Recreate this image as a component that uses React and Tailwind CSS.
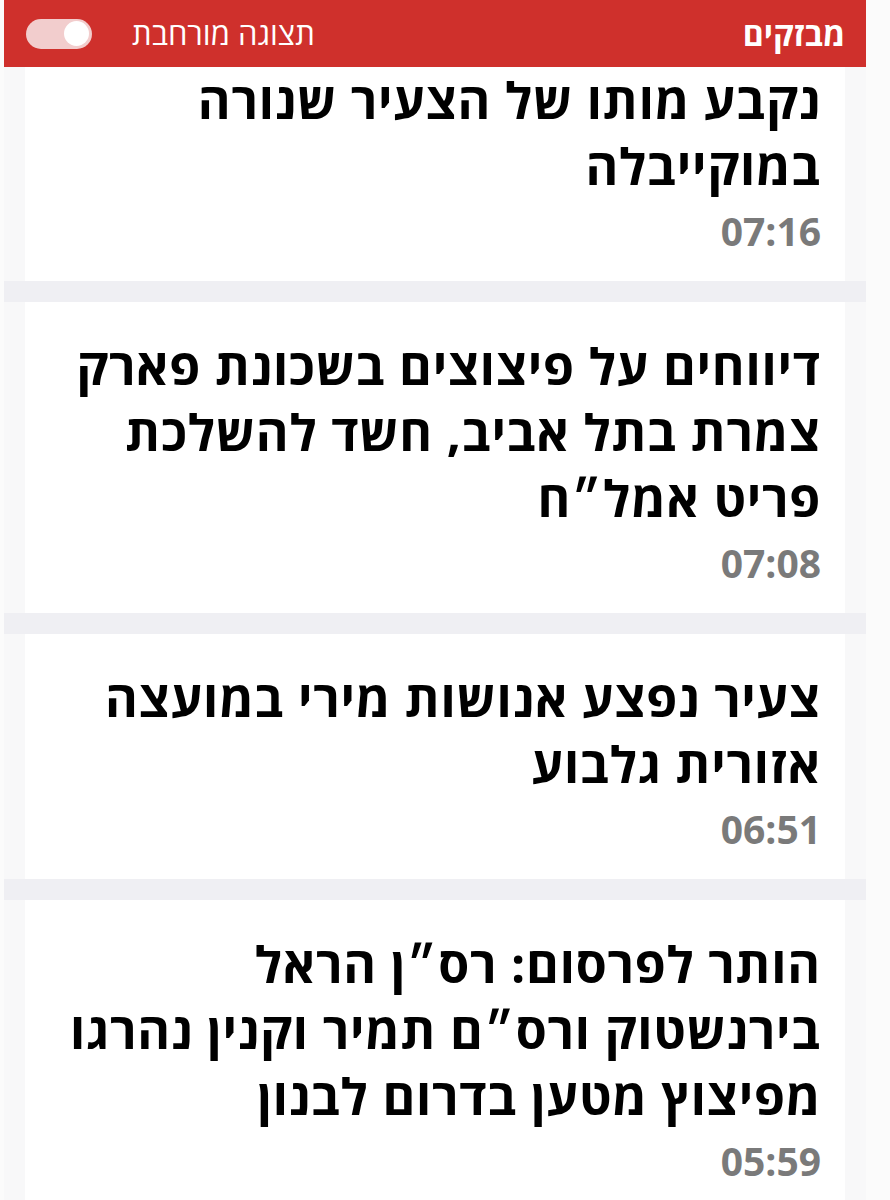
import React from "react";

const items = [
  { lines: ["נקבע מותו של הצעיר שנורה", "במוקייבלה"], time: "07:16", first: true },
  { lines: ["דיווחים על פיצוצים בשכונת פארק", "צמרת בתל אביב, חשד להשלכת", "פריט אמל״ח"], time: "07:08" },
  { lines: ["צעיר נפצע אנושות מירי במועצה", "אזורית גלבוע"], time: "06:51" },
  { lines: ["הותר לפרסום: רס״ן הראל", "בירנשטוק ורס״ם תמיר וקנין נהרגו", "מפיצוץ מטען בדרום לבנון"], time: "05:59" },
];

export default function App() {
  return (
    <div
      dir="rtl"
      className="w-[890px] h-[1200px] overflow-hidden bg-[#fbfbfb]"
      style={{ fontFamily: '"Open Sans", "Liberation Sans", "DejaVu Sans", sans-serif' }}
    >
      <div className="w-[862px] mr-[24px] ml-[4px] min-h-[1200px] bg-[#f8f8f9]">
        <header className="h-[67px] bg-[#cf302c] flex items-center justify-between pr-[21px] pl-[22px]">
          <span className="text-white font-bold text-[32px] leading-none">מבזקים</span>
          <div className="flex items-center gap-[40px]">
            <span className="text-white text-[31px] leading-none">תצוגה מורחבת</span>
            <div className="w-[66px] h-[30px] rounded-full bg-[#f2cdcd] flex items-center justify-start p-[3px]">
              <div className="w-[25px] h-[25px] rounded-full bg-white" />
            </div>
          </div>
        </header>
        <div className="flex flex-col">
          {items.map((it, i) => (
            <div key={i}>
              {i > 0 && <div className="h-[21px] bg-[#efeff3]" />}
              <div
                className={
                  "mx-[21px] bg-white pr-[24px] pl-[20px] pb-[31px] " +
                  (it.first ? "pt-0" : "pt-[31px]")
                }
              >
                <h2 className="text-[50px] font-bold leading-[66px] tracking-[0.8px] text-black">
                  {it.lines.map((l, j) => (
                    <span key={j} className="block whitespace-nowrap">{l}</span>
                  ))}
                </h2>
                <div className="mt-[13px] text-[39px] font-bold leading-[38px] text-[#7a7a7a]">{it.time}</div>
              </div>
            </div>
          ))}
        </div>
      </div>
    </div>
  );
}
